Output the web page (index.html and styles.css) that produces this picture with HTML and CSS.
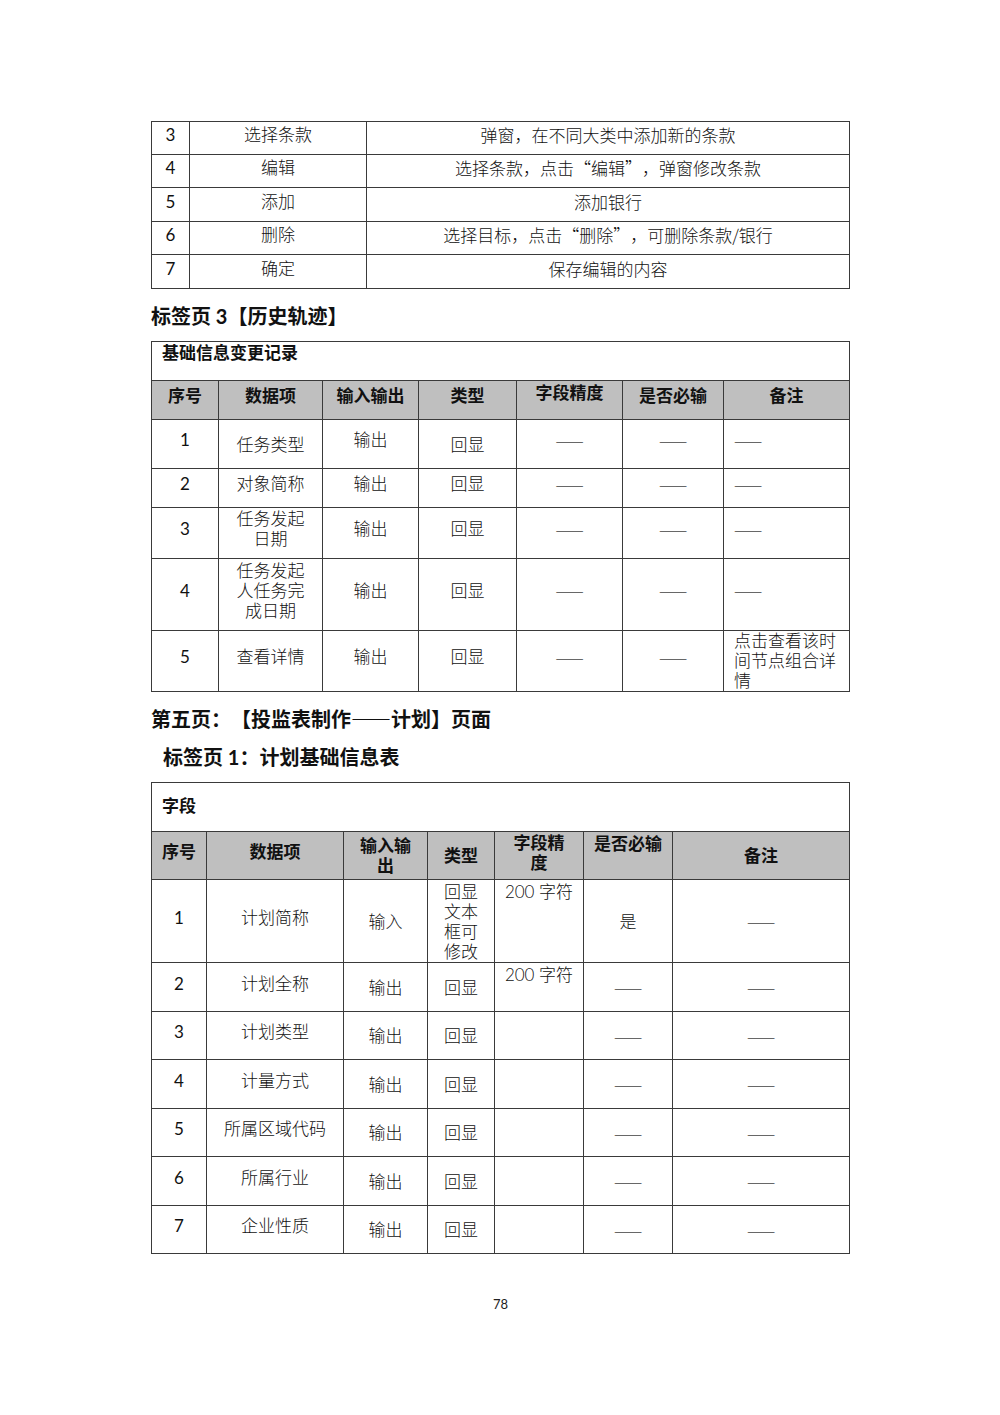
FILE: index.html
```html
<!DOCTYPE html>
<html lang="zh-CN">
<head>
<meta charset="utf-8">
<title>78</title>
<link rel="stylesheet" href="styles.css">
</head>
<body>
<main class="page">
  <table class="grid t1">
    <colgroup><col class="w38"><col class="w177"><col></colgroup>
    <tr class="r33"><td class="n">3</td><td>选择条款</td><td class="cjk">弹窗，在不同大类中添加新的条款</td></tr>
    <tr class="r33"><td class="n">4</td><td>编辑</td><td class="cjk">选择条款，点击“编辑”，弹窗修改条款</td></tr>
    <tr class="r34"><td class="n">5</td><td>添加</td><td class="cjk">添加银行</td></tr>
    <tr class="r33"><td class="n">6</td><td>删除</td><td class="cjk">选择目标，点击“删除”，可删除条款/银行</td></tr>
    <tr class="r34"><td class="n">7</td><td>确定</td><td class="cjk">保存编辑的内容</td></tr>
  </table>

  <h2 class="heading">标签页 3【历史轨迹】</h2>

  <table class="grid t2">
    <colgroup><col class="w67"><col class="w104"><col class="w96"><col class="w98"><col class="w106"><col class="w101"><col></colgroup>
    <tr class="r39"><td colspan="7" class="title top">基础信息变更记录</td></tr>
    <tr class="r39 head"><td>序号</td><td>数据项</td><td>输入输出</td><td>类型</td><td class="top">字段精度</td><td>是否必输</td><td>备注</td></tr>
    <tr class="r49"><td class="n">1</td><td class="dn">任务类型</td><td>输出</td><td class="dn">回显</td><td><span class="dash">——</span></td><td><span class="dash">——</span></td><td class="left"><span class="dash">——</span></td></tr>
    <tr class="r39"><td class="n">2</td><td>对象简称</td><td>输出</td><td>回显</td><td><span class="dash">——</span></td><td><span class="dash">——</span></td><td class="left"><span class="dash">——</span></td></tr>
    <tr class="r51"><td class="n">3</td><td>任务发起<br>日期</td><td>输出</td><td>回显</td><td><span class="dash">——</span></td><td><span class="dash">——</span></td><td class="left"><span class="dash">——</span></td></tr>
    <tr class="r72"><td class="n">4</td><td>任务发起<br>人任务完<br>成日期</td><td>输出</td><td>回显</td><td><span class="dash">——</span></td><td><span class="dash">——</span></td><td class="left"><span class="dash">——</span></td></tr>
    <tr class="r61"><td class="n">5</td><td>查看详情</td><td>输出</td><td>回显</td><td><span class="dash">——</span></td><td><span class="dash">——</span></td><td class="left full">点击查看该时<br>间节点组合详<br>情</td></tr>
  </table>

  <h2 class="heading">第五页：【投监表制作<span class="cjk">——</span>计划】页面</h2>
  <h2 class="heading sub">标签页 1：计划基础信息表</h2>

  <table class="grid t3">
    <colgroup><col class="w55"><col class="w137"><col class="w84"><col class="w67"><col class="w89"><col class="w89"><col></colgroup>
    <tr class="r49"><td colspan="7" class="title">字段</td></tr>
    <tr class="r48 head"><td class="up">序号</td><td class="up">数据项</td><td>输入输<br>出</td><td>类型</td><td class="up2">字段精<br>度</td><td class="top">是否必输</td><td>备注</td></tr>
    <tr class="r82"><td class="up n">1</td><td class="up">计划简称</td><td>输入</td><td class="top">回显<br>文本<br>框可<br>修改</td><td class="top">200 字符</td><td>是</td><td><span class="dash">——</span></td></tr>
    <tr class="r49"><td class="up n">2</td><td class="up">计划全称</td><td>输出</td><td>回显</td><td class="top">200 字符</td><td><span class="dash">——</span></td><td><span class="dash">——</span></td></tr>
    <tr class="r48"><td class="up n">3</td><td class="up">计划类型</td><td>输出</td><td>回显</td><td></td><td><span class="dash">——</span></td><td><span class="dash">——</span></td></tr>
    <tr class="r49"><td class="up n">4</td><td class="up">计量方式</td><td>输出</td><td>回显</td><td></td><td><span class="dash">——</span></td><td><span class="dash">——</span></td></tr>
    <tr class="r48"><td class="up n">5</td><td class="up">所属区域代码</td><td>输出</td><td>回显</td><td></td><td><span class="dash">——</span></td><td><span class="dash">——</span></td></tr>
    <tr class="r49"><td class="up n">6</td><td class="up">所属行业</td><td>输出</td><td>回显</td><td></td><td><span class="dash">——</span></td><td><span class="dash">——</span></td></tr>
    <tr class="r48"><td class="up n">7</td><td class="up">企业性质</td><td>输出</td><td>回显</td><td></td><td><span class="dash">——</span></td><td><span class="dash">——</span></td></tr>
  </table>

  <footer class="pageno">78</footer>
</main>
</body>
</html>
```

FILE: styles.css
```css
html, body {
  margin: 0;
  padding: 0;
  background: #ffffff;
}

body {
  font-family: Lato, "Noto Sans CJK SC", sans-serif;
  color: #111;
  width: 1000px;
  height: 1415px;
  overflow: hidden;
  text-spacing-trim: space-all;
}

.page {
  padding: 121px 0 0 151px;
  width: 699px;
}

.grid {
  width: 699px;
  border-collapse: collapse;
  table-layout: fixed;
  font-size: 17px;
  line-height: 20px;
}

.grid td {
  border: 1px solid #3a3a3a;
  text-align: center;
  vertical-align: middle;
  padding: 0 2px;
  font-weight: 300;
}

.grid td.n {
  font-weight: 400;
  color: #111;
}

.cjk,
.grid td.cjk {
  font-family: "Noto Sans CJK SC", sans-serif;
}

.t1 td { padding-bottom: 6px; }
.t2 td { padding-bottom: 8px; }
.t2 td.dn { padding-bottom: 0; padding-top: 2px; }
.t3 td { padding-top: 1px; }
.t3 td.up { padding-bottom: 8px; }
.t3 td.up2 { padding-bottom: 6px; padding-top: 0; }

.grid td.top {
  vertical-align: top;
  padding-top: 2px;
  padding-bottom: 0;
}

.grid td.left {
  text-align: left;
  padding-left: 10px;
}

.grid td.full {
  padding: 0 4px 0 10px;
  vertical-align: middle;
}

.grid .head td {
  background: #bfbfbf;
  font-weight: 700;
  color: #111;
}

.grid td.title {
  text-align: left;
  font-weight: 700;
  color: #111;
  padding-left: 10px;
}

.t2 td.title { padding-top: 1px; }
.t3 td.title { padding-top: 0; padding-bottom: 2px; }

.w38 { width: 38px; }
.w177 { width: 177px; }
.w67 { width: 67px; }
.w104 { width: 104px; }
.w96 { width: 96px; }
.w98 { width: 98px; }
.w106 { width: 106px; }
.w101 { width: 101px; }
.w55 { width: 55px; }
.w137 { width: 137px; }
.w84 { width: 84px; }
.w89 { width: 89px; }

.r33 { height: 33px; }
.r34 { height: 34px; }
.r39 { height: 39px; }
.r48 { height: 48px; }
.r49 { height: 49px; }
.r51 { height: 51px; }
.r61 { height: 61px; }
.r72 { height: 72px; }
.r82 { height: 82px; }

.dash {
  font-family: "Noto Sans CJK SC", sans-serif;
  color: #444;
}

.heading {
  margin: 14px 0 12px 0;
  font-size: 20px;
  line-height: 26px;
  font-weight: 700;
  color: #111;
}

.heading.sub {
  margin: 12px 0 12px 12px;
}

.pageno {
  margin-top: 41px;
  width: 699px;
  text-align: center;
  font-size: 13px;
  line-height: 18px;
  color: #222;
}
```
